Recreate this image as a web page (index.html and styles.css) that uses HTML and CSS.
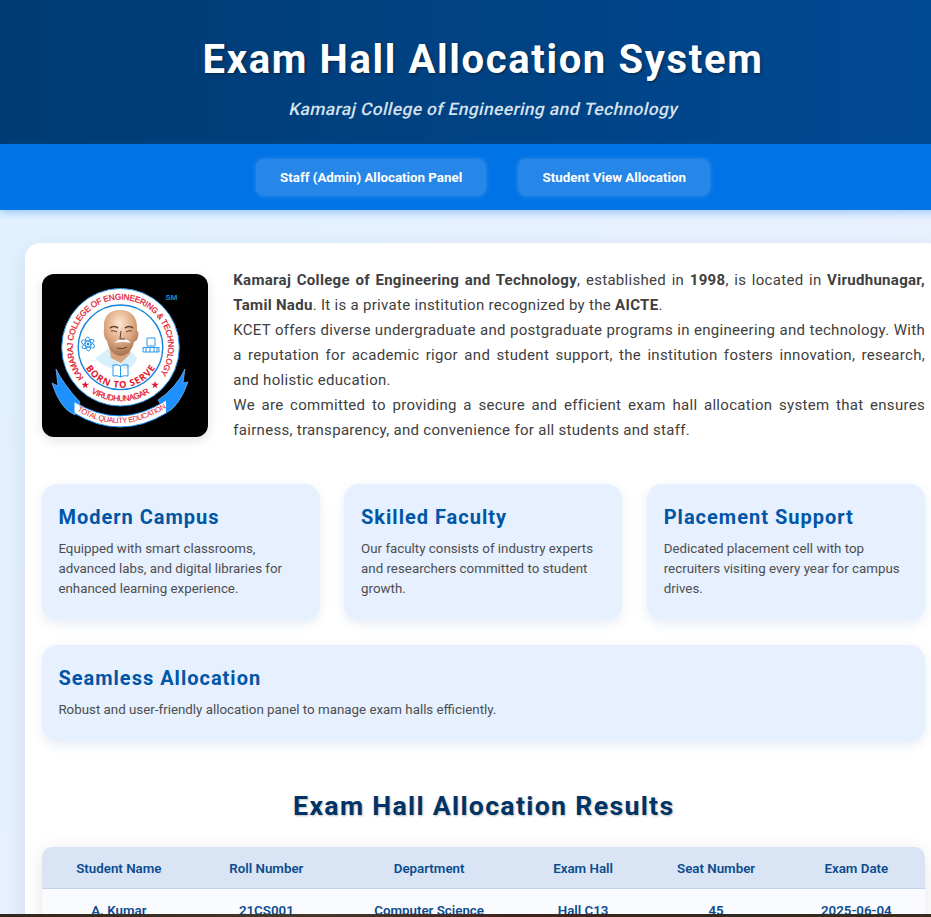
FILE: index.html
```html
<!DOCTYPE html>
<html lang="en">
<head>
<meta charset="utf-8">
<title>Exam Hall Allocation System</title>
<link rel="stylesheet" href="styles.css">
</head>
<body>
<div class="viewport">
<div class="page">
  <header class="header">
    <h1>Exam Hall Allocation System</h1>
    <p>Kamaraj College of Engineering and Technology</p>
  </header>
  <nav class="nav">
    <a class="nav-link">Staff (Admin) Allocation Panel</a>
    <a class="nav-link">Student View Allocation</a>
  </nav>
  <main class="container">
    <section class="about">
      <svg class="logo" viewBox="0 0 166 163" role="img" aria-label="College emblem">
        <defs>
          <path id="outer" d="M42.5 104.5A47.7 47.7 0 1 1 114.5 104.5"/>
          <path id="lower" d="M24.5 73.3A54 54 0 0 0 132.5 73.3" />
          <path id="motto" d="M38 73.3A40.5 40.5 0 0 0 119 73.3"/>
          <path id="banner" d="M34 136Q78 163 124 134"/>
          <radialGradient id="face" cx=".45" cy=".3" r=".75"><stop offset="0" stop-color="#ffe7d2"/><stop offset=".55" stop-color="#dca67e"/><stop offset="1" stop-color="#9c6848"/></radialGradient>
          <path id="star" d="M0-4L1-1.3L3.9-1.3L1.5.5L2.4 3.3L0 1.6L-2.4 3.3L-1.5.5L-3.9-1.3L-1-1.3Z"/>
        </defs>
        <rect width="166" height="163" fill="#000"/>
        <path d="M14 95Q22 111 38 128L33 141Q18 135 10 109L16 112Z" fill="#1e90ff" stroke="#8cc8ff" stroke-width=".6"/>
        <path d="M143 95Q134 114 116 126L124 139Q137 133 146 108L141 109Z" fill="#1e90ff" stroke="#8cc8ff" stroke-width=".6"/>
        <circle cx="78.5" cy="73.3" r="58.8" fill="#fff" stroke="#2a8fe0" stroke-width="1"/>
        <circle cx="78.5" cy="73.3" r="42.3" fill="#fff" stroke="#1683d8" stroke-width="1.4"/>
        <path d="M32 127.5Q78 157 124.5 126V139Q78 167 32 139Z" fill="#fff" stroke="#1e90ff" stroke-width="1"/>
        <text class="ring"><textPath href="#outer" startOffset="1" textLength="211">KAMARAJ COLLEGE OF ENGINEERING &amp; TECHNOLOGY</textPath></text>
        <text class="ring" text-anchor="middle"><textPath href="#lower" startOffset="50%" textLength="62">VIRUDHUNAGAR</textPath></text>
        <text class="born" text-anchor="middle"><textPath href="#motto" startOffset="50%" textLength="84">BORN TO SERVE</textPath></text>
        <text class="ribbon"><textPath href="#banner" startOffset="1" textLength="95">TOTAL QUALITY EDUCATION</textPath></text>
        <use href="#star" x="43.3" y="111" fill="#e3172d"/><use href="#star" x="113" y="111" fill="#e3172d"/>
        <path d="M53 84Q60 80 67 74L88 76Q94 82 95 85Q91 94 83 95L79 90L70 94Q60 92 53 84Z" fill="#d7effa"/>
        <path d="M67 70L69 84L79 89L88 80V65Z" fill="#d9a37c"/>
        <path d="M62 54C61 44 66 36 78 36C91 36 96 45 95 57Q98 57 95 66L92 68C90 77 85 81 79 82C71 81 67 76 65 67Q61 64 62 54Z" fill="url(#face)"/>
        <path d="M68 54Q72 51 76 54M83 54Q87 51 91 54" fill="none" stroke="#5c3b2b" stroke-width="1.6"/>
        <path d="M69 57Q72 56 75 58M84 58Q87 56 90 57M79 57L78 65H83M75 74Q80 76 85 73" fill="none" stroke="#65402e" stroke-width="1"/>
        <path d="M72 69Q76 64 80 66Q86 64 89 69L81 68Z" fill="#fff" stroke="#b9aaa0" stroke-width=".4"/>
        <g fill="none" stroke="#168ce5" stroke-width=".9">
          <ellipse cx="46" cy="70" rx="7" ry="2.7" transform="rotate(25 46 70)"/><ellipse cx="46" cy="70" rx="7" ry="2.7" transform="rotate(85 46 70)"/><ellipse cx="46" cy="70" rx="7" ry="2.7" transform="rotate(145 46 70)"/>
          <path d="M105 64H113V72H105ZM101 73.5H117V78H101ZM104 74V78M108 74V78M112 74V78M115 74V78"/>
          <path d="M71 91Q75 90 78.5 92Q82 90 86 91V102Q82 101 78.5 103Q75 101 71 102ZM78.5 92V103"/>
        </g>
        <circle cx="46" cy="70" r="1.3" fill="#168ce5"/>
        <text class="mark" x="123.5" y="25.5">SM</text>
      </svg>
      <div class="about-text">
        <p><strong>Kamaraj College of Engineering and Technology</strong>, established in <strong>1998</strong>, is located in <strong>Virudhunagar, Tamil Nadu</strong>. It is a private institution recognized by the <strong>AICTE</strong>.</p>
        <p>KCET offers diverse undergraduate and postgraduate programs in engineering and technology. With a reputation for academic rigor and student support, the institution fosters innovation, research, and holistic education.</p>
        <p>We are committed to providing a secure and efficient exam hall allocation system that ensures fairness, transparency, and convenience for all students and staff.</p>
      </div>
    </section>
    <section class="cards">
      <article class="card"><h3>Modern Campus</h3><p>Equipped with smart classrooms, advanced labs, and digital libraries for enhanced learning experience.</p></article>
      <article class="card"><h3>Skilled Faculty</h3><p>Our faculty consists of industry experts and researchers committed to student growth.</p></article>
      <article class="card"><h3>Placement Support</h3><p>Dedicated placement cell with top recruiters visiting every year for campus drives.</p></article>
      <article class="card wide"><h3>Seamless Allocation</h3><p>Robust and user-friendly allocation panel to manage exam halls efficiently.</p></article>
    </section>
    <h2>Exam Hall Allocation Results</h2>
    <table class="results">
      <colgroup><col class="c-name"><col class="c-roll"><col class="c-dept"><col class="c-hall"><col class="c-seat"><col></colgroup>
      <thead><tr><th>Student Name</th><th>Roll Number</th><th>Department</th><th>Exam Hall</th><th>Seat Number</th><th>Exam Date</th></tr></thead>
      <tbody><tr><td>A. Kumar</td><td>21CS001</td><td>Computer Science</td><td>Hall C13</td><td>45</td><td>2025-06-04</td></tr></tbody>
    </table>
  </main>
</div>
</div>
<div class="bottom-edge"></div>
</body>
</html>
```
FILE: styles.css
```css
* { box-sizing: border-box; }
body {
  margin: 0;
  height: 917px;
  overflow: hidden;
  display: flex;
  flex-direction: column;
  font-family: Roboto, "Liberation Sans", sans-serif;
  color: #404040;
}
h1, h2, h3, p { margin: 0; }
.viewport { height: 914px; overflow: hidden; }
.bottom-edge { height: 3px; background: linear-gradient(90deg, #33261d, #44382f 35%, #40231c 55%, #30291f 80%, #392b1e); }
.page { width: 966px; height: 1100px; background: linear-gradient(135deg, #e0f2ff, #f0f0ff); }
.header {
  height: 144px;
  padding-top: 36px;
  text-align: center;
  color: #fff;
  background: linear-gradient(90deg, #003b73, #004a94);
}
.header h1 {
  font-size: 40px;
  line-height: 48px;
  letter-spacing: 1.64px;
  text-shadow: 1px 1px 3px rgba(0, 0, 0, .45);
}
.header p {
  margin-top: 14px;
  padding-left: 2px;
  font-size: 17.33px;
  line-height: 22px;
  transform: skewX(-13deg);
  font-weight: 500;
  letter-spacing: .42px;
  color: #d6e2ee;
}
.nav {
  position: relative;
  height: 66px;
  display: flex;
  justify-content: center;
  align-items: center;
  gap: 32px;
  background: #0073e6;
  box-shadow: 0 3px 8px rgba(0, 115, 230, .3);
}
.nav-link {
  padding: 0 24.2px;
  border-radius: 8px;
  font-size: 13.33px;
  font-weight: 700;
  line-height: 37px;
  color: #fff;
  background: rgba(255, 255, 255, .15);
  box-shadow: 0 0 5px rgba(255, 255, 255, .2);
}
.container {
  width: 916.6px;
  height: 850px;
  margin: 33px 0 0 25px;
  padding: 25px 16.6px;
  border-radius: 15px;
  background: #fff;
  box-shadow: 0 8px 25px rgba(0, 0, 0, .1);
}
.about { display: flex; gap: 25.7px; height: 175px; }
.logo {
  flex: none;
  width: 166px;
  height: 163px;
  margin-top: 6px;
  border-radius: 12px;
  box-shadow: 0 3px 12px rgba(0, 0, 0, .12);
}
.logo text { font-family: "Liberation Sans", sans-serif; font-weight: 700; fill: #e3172d; }
.logo .ring { font-size: 8.2px; font-weight: 400; stroke: #e3172d; stroke-width: .25px; }
.logo .born { font-size: 9.4px; font-family: "Open Sans", sans-serif; }
.logo .ribbon { font-size: 7.6px; font-weight: 400; }
.logo .mark { font-size: 8px; fill: #168ce5; }
.about-text {
  flex: 1;
  font-size: 15px;
  line-height: 25px;
  letter-spacing: .3px;
  text-align: justify;
}
.cards {
  display: grid;
  grid-template-columns: repeat(3, 1fr);
  gap: 24.6px;
  margin-top: 41px;
}
.card {
  height: 136.4px;
  padding: 20px 16.8px;
  border-radius: 15px;
  background: #e6f0ff;
  box-shadow: 0 4px 12px rgba(0, 74, 148, .1);
}
.card.wide { grid-column: 1 / -1; height: 96px; }
.card h3 { font-size: 20px; line-height: 26px; letter-spacing: 1px; color: #0056a6; font-weight: 700; }
.card p { margin-top: 9px; font-size: 13.33px; line-height: 20px; color: #4e4e4e; }
h2 {
  margin-top: 47px;
  padding-left: 1px;
  text-align: center;
  font-size: 26.67px;
  line-height: 36px;
  letter-spacing: 1.33px;
  color: #003366;
  text-shadow: 1px 1px 2px rgba(0, 0, 0, .25);
}
.results {
  width: 100%;
  margin-top: 23px;
  table-layout: fixed;
  border-collapse: separate;
  border-spacing: 0;
  border-radius: 10px;
  overflow: hidden;
  background: #fafbff;
  box-shadow: 0 4px 20px rgba(0, 0, 0, .1);
  font-size: 13.33px;
  line-height: 20px;
  color: #0b4c8f;
  text-align: center;
}
.results th { height: 42px; padding: 3px 0 0 1px; background: #d9e4f5; border-bottom: 1px solid #c5d3e8; font-weight: 600; }
.results td { height: 42px; padding: 2px 0 0 1px; font-weight: 600; }
.c-name { width: 153.5px; }
.c-roll { width: 141.5px; }
.c-dept { width: 184px; }
.c-hall { width: 124px; }
.c-seat { width: 142px; }
```
